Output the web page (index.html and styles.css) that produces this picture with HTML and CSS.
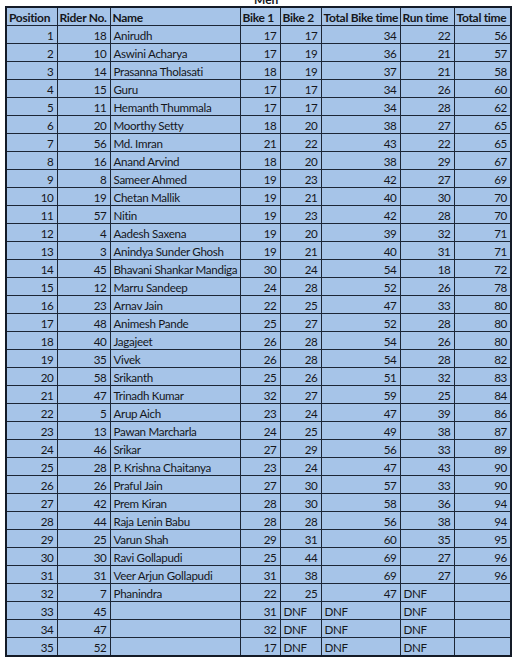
FILE: index.html
```html
<!DOCTYPE html>
<html>
<head>
<meta charset="utf-8">
<link rel="stylesheet" href="styles.css">
</head>
<body>
<div class="sheet">
  <div class="title"><span>Men</span></div>
  <table class="results">
    <colgroup>
      <col class="c-pos"><col class="c-rider"><col class="c-name"><col class="c-b1"><col class="c-b2"><col class="c-tb"><col class="c-run"><col class="c-tot">
    </colgroup>
    <thead>
      <tr><th>Position</th><th>Rider No.</th><th>Name</th><th>Bike 1</th><th>Bike 2</th><th>Total Bike time</th><th>Run time</th><th>Total time</th></tr>
    </thead>
    <tbody>
      <tr><td class="n">1</td><td class="n">18</td><td>Anirudh</td><td class="n">17</td><td class="n">17</td><td class="n">34</td><td class="n">22</td><td class="n">56</td></tr>
      <tr><td class="n">2</td><td class="n">10</td><td>Aswini Acharya</td><td class="n">17</td><td class="n">19</td><td class="n">36</td><td class="n">21</td><td class="n">57</td></tr>
      <tr><td class="n">3</td><td class="n">14</td><td>Prasanna Tholasati</td><td class="n">18</td><td class="n">19</td><td class="n">37</td><td class="n">21</td><td class="n">58</td></tr>
      <tr><td class="n">4</td><td class="n">15</td><td>Guru</td><td class="n">17</td><td class="n">17</td><td class="n">34</td><td class="n">26</td><td class="n">60</td></tr>
      <tr><td class="n">5</td><td class="n">11</td><td>Hemanth Thummala</td><td class="n">17</td><td class="n">17</td><td class="n">34</td><td class="n">28</td><td class="n">62</td></tr>
      <tr><td class="n">6</td><td class="n">20</td><td>Moorthy Setty</td><td class="n">18</td><td class="n">20</td><td class="n">38</td><td class="n">27</td><td class="n">65</td></tr>
      <tr><td class="n">7</td><td class="n">56</td><td>Md. Imran</td><td class="n">21</td><td class="n">22</td><td class="n">43</td><td class="n">22</td><td class="n">65</td></tr>
      <tr><td class="n">8</td><td class="n">16</td><td>Anand Arvind</td><td class="n">18</td><td class="n">20</td><td class="n">38</td><td class="n">29</td><td class="n">67</td></tr>
      <tr><td class="n">9</td><td class="n">8</td><td>Sameer Ahmed</td><td class="n">19</td><td class="n">23</td><td class="n">42</td><td class="n">27</td><td class="n">69</td></tr>
      <tr><td class="n">10</td><td class="n">19</td><td>Chetan Mallik</td><td class="n">19</td><td class="n">21</td><td class="n">40</td><td class="n">30</td><td class="n">70</td></tr>
      <tr><td class="n">11</td><td class="n">57</td><td>Nitin</td><td class="n">19</td><td class="n">23</td><td class="n">42</td><td class="n">28</td><td class="n">70</td></tr>
      <tr><td class="n">12</td><td class="n">4</td><td>Aadesh Saxena</td><td class="n">19</td><td class="n">20</td><td class="n">39</td><td class="n">32</td><td class="n">71</td></tr>
      <tr><td class="n">13</td><td class="n">3</td><td>Anindya Sunder Ghosh</td><td class="n">19</td><td class="n">21</td><td class="n">40</td><td class="n">31</td><td class="n">71</td></tr>
      <tr><td class="n">14</td><td class="n">45</td><td>Bhavani Shankar Mandiga</td><td class="n">30</td><td class="n">24</td><td class="n">54</td><td class="n">18</td><td class="n">72</td></tr>
      <tr><td class="n">15</td><td class="n">12</td><td>Marru Sandeep</td><td class="n">24</td><td class="n">28</td><td class="n">52</td><td class="n">26</td><td class="n">78</td></tr>
      <tr><td class="n">16</td><td class="n">23</td><td>Arnav Jain</td><td class="n">22</td><td class="n">25</td><td class="n">47</td><td class="n">33</td><td class="n">80</td></tr>
      <tr><td class="n">17</td><td class="n">48</td><td>Animesh Pande</td><td class="n">25</td><td class="n">27</td><td class="n">52</td><td class="n">28</td><td class="n">80</td></tr>
      <tr><td class="n">18</td><td class="n">40</td><td>Jagajeet</td><td class="n">26</td><td class="n">28</td><td class="n">54</td><td class="n">26</td><td class="n">80</td></tr>
      <tr><td class="n">19</td><td class="n">35</td><td>Vivek</td><td class="n">26</td><td class="n">28</td><td class="n">54</td><td class="n">28</td><td class="n">82</td></tr>
      <tr><td class="n">20</td><td class="n">58</td><td>Srikanth</td><td class="n">25</td><td class="n">26</td><td class="n">51</td><td class="n">32</td><td class="n">83</td></tr>
      <tr><td class="n">21</td><td class="n">47</td><td>Trinadh Kumar</td><td class="n">32</td><td class="n">27</td><td class="n">59</td><td class="n">25</td><td class="n">84</td></tr>
      <tr><td class="n">22</td><td class="n">5</td><td>Arup Aich</td><td class="n">23</td><td class="n">24</td><td class="n">47</td><td class="n">39</td><td class="n">86</td></tr>
      <tr><td class="n">23</td><td class="n">13</td><td>Pawan Marcharla</td><td class="n">24</td><td class="n">25</td><td class="n">49</td><td class="n">38</td><td class="n">87</td></tr>
      <tr><td class="n">24</td><td class="n">46</td><td>Srikar</td><td class="n">27</td><td class="n">29</td><td class="n">56</td><td class="n">33</td><td class="n">89</td></tr>
      <tr><td class="n">25</td><td class="n">28</td><td>P. Krishna Chaitanya</td><td class="n">23</td><td class="n">24</td><td class="n">47</td><td class="n">43</td><td class="n">90</td></tr>
      <tr><td class="n">26</td><td class="n">26</td><td>Praful Jain</td><td class="n">27</td><td class="n">30</td><td class="n">57</td><td class="n">33</td><td class="n">90</td></tr>
      <tr><td class="n">27</td><td class="n">42</td><td>Prem Kiran</td><td class="n">28</td><td class="n">30</td><td class="n">58</td><td class="n">36</td><td class="n">94</td></tr>
      <tr><td class="n">28</td><td class="n">44</td><td>Raja Lenin Babu</td><td class="n">28</td><td class="n">28</td><td class="n">56</td><td class="n">38</td><td class="n">94</td></tr>
      <tr><td class="n">29</td><td class="n">25</td><td>Varun Shah</td><td class="n">29</td><td class="n">31</td><td class="n">60</td><td class="n">35</td><td class="n">95</td></tr>
      <tr><td class="n">30</td><td class="n">30</td><td>Ravi Gollapudi</td><td class="n">25</td><td class="n">44</td><td class="n">69</td><td class="n">27</td><td class="n">96</td></tr>
      <tr><td class="n">31</td><td class="n">31</td><td>Veer Arjun Gollapudi</td><td class="n">31</td><td class="n">38</td><td class="n">69</td><td class="n">27</td><td class="n">96</td></tr>
      <tr><td class="n">32</td><td class="n">7</td><td>Phanindra</td><td class="n">22</td><td class="n">25</td><td class="n">47</td><td>DNF</td><td></td></tr>
      <tr><td class="n">33</td><td class="n">45</td><td></td><td class="n">31</td><td>DNF</td><td>DNF</td><td>DNF</td><td></td></tr>
      <tr><td class="n">34</td><td class="n">47</td><td></td><td class="n">32</td><td>DNF</td><td>DNF</td><td>DNF</td><td></td></tr>
      <tr><td class="n">35</td><td class="n">52</td><td></td><td class="n">17</td><td>DNF</td><td>DNF</td><td>DNF</td><td></td></tr>
    </tbody>
  </table>
</div>
</body>
</html>
```

FILE: styles.css
```css
html, body {
  margin: 0;
  padding: 0;
  background: #ffffff;
}

.sheet {
  padding: 0 0 0 5px;
  font-family: Lato, "Liberation Sans", sans-serif;
  color: #15171c;
}

.title {
  height: 6px;
  overflow: hidden;
  padding-left: 249px;
  font-size: 12px;
  font-weight: bold;
}

.title span {
  display: block;
  line-height: 12px;
  margin-top: -6px;
}

.results {
  border-collapse: collapse;
  table-layout: fixed;
  width: 507px;
  border: 2px solid #141b27;
  font-size: 12px;
  background: #a6c4e8;
}

.c-pos { width: 51px; }
.c-rider { width: 53px; }
.c-name { width: 130px; }
.c-b1 { width: 40px; }
.c-b2 { width: 41px; }
.c-tb { width: 79px; }
.c-run { width: 54px; }
.c-tot { width: 57px; }

.results th,
.results td {
  border: 1px solid #1c2636;
  height: 17px;
  padding: 0 3px;
  line-height: 15px;
  white-space: nowrap;
  overflow: hidden;
  text-align: left;
  vertical-align: bottom;
  letter-spacing: -0.3px;
}

.results td {
  font-size: 11.6px;
}

.results th {
  font-weight: bold;
  padding-left: 2px;
}

.results td.n {
  text-align: right;
  padding-right: 3px;
}
```
